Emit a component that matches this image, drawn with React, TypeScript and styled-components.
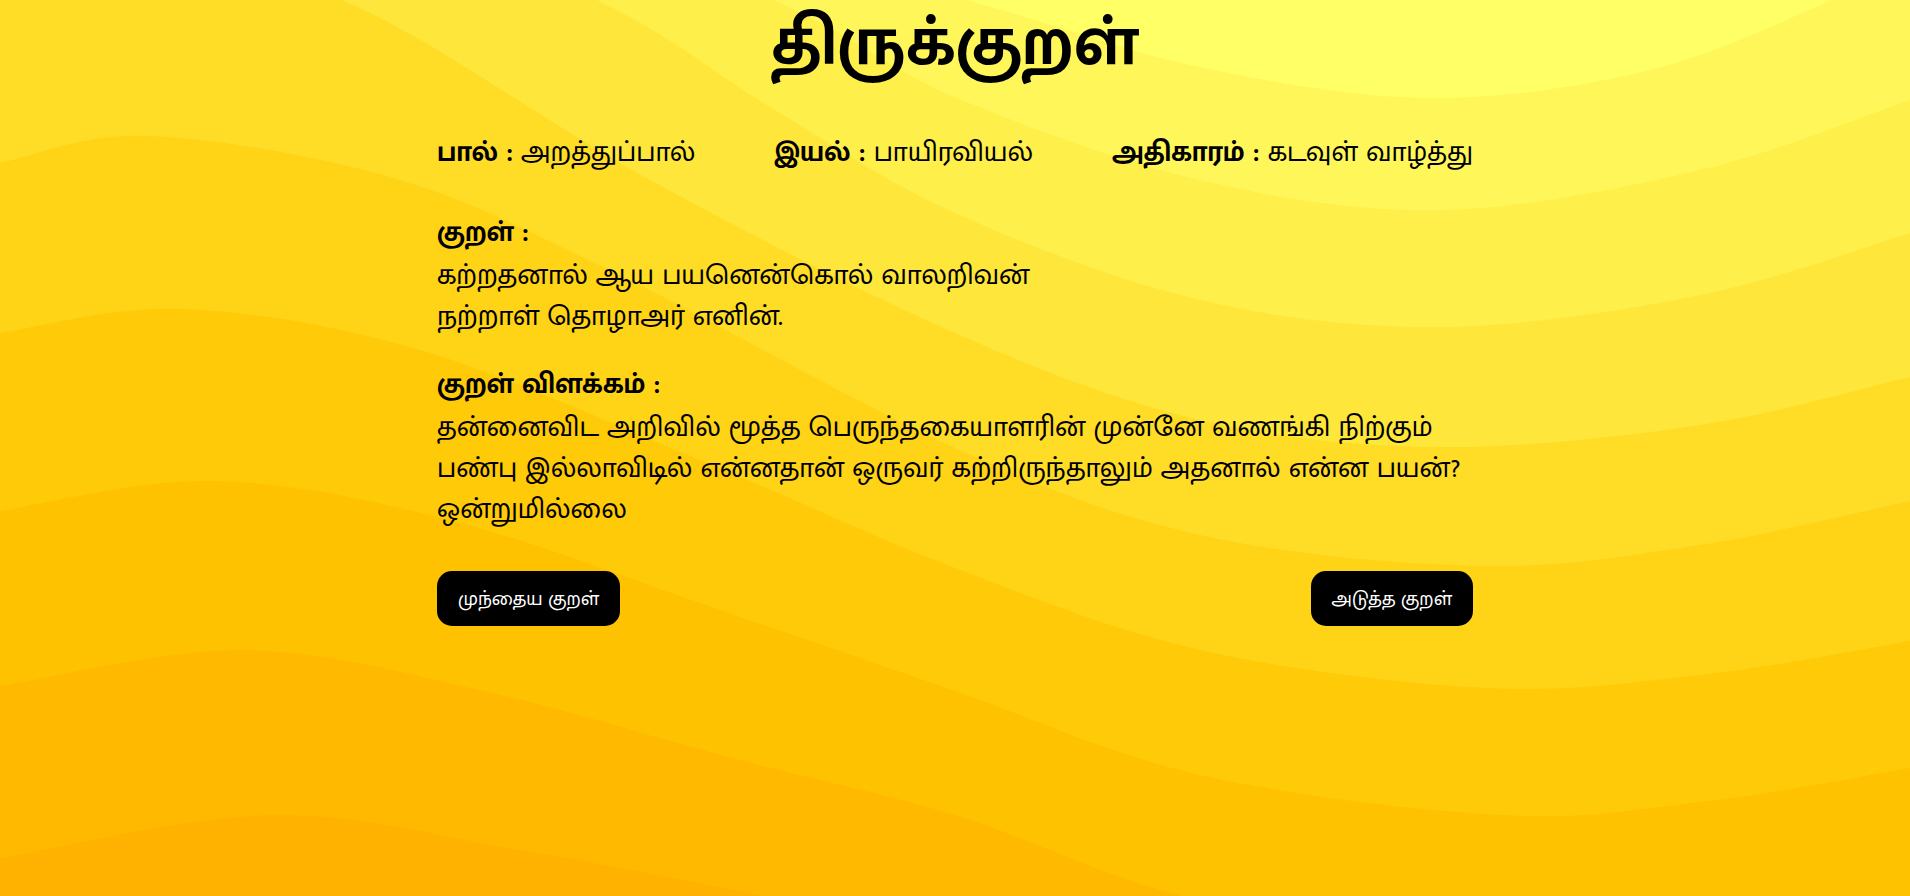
import React from 'react';
import styled, { createGlobalStyle } from 'styled-components';

const GlobalStyle = createGlobalStyle`
  html, body { margin: 0; padding: 0; }
  body {
    font-family: "Mukta Malar", "Noto Sans", sans-serif;
    color: #000;
    background: #ffb300;
  }
`;

const Page = styled.div`
  position: relative;
  width: 100%;
  height: 896px;
  overflow: hidden;
`;

const WaveLayer = styled.svg`
  position: absolute;
  inset: 0;
  width: 100%;
  height: 100%;
  z-index: 0;
`;

const Content = styled.main`
  position: relative;
  z-index: 1;
  width: 1036px;
  margin: 0 auto;
  display: flex;
  flex-direction: column;
`;

const Title = styled.h1`
  margin: 0;
  padding-top: 2px;
  font-size: 69px;
  line-height: 84px;
  font-weight: 700;
  text-align: center;
`;

const MetaRow = styled.div`
  margin-top: 46px;
  display: flex;
  justify-content: space-between;
  font-size: 29px;
  line-height: 41px;
`;

const MetaItem = styled.div`
  white-space: nowrap;
`;

const Label = styled.span`
  font-weight: 700;
`;

const Section = styled.section<{ $gap: number }>`
  margin-top: ${(p) => p.$gap}px;
  font-size: 29px;
  line-height: 41px;
`;

const Heading = styled.div`
  font-weight: 700;
  margin-bottom: 2px;
`;

const Body = styled.p`
  margin: 0;
`;

const ButtonRow = styled.div`
  margin-top: 41px;
  display: flex;
  justify-content: space-between;
`;

const NavButton = styled.button`
  height: 55px;
  padding: 0 21px;
  border: none;
  border-radius: 15px;
  background: #000;
  color: #fff;
  font-family: inherit;
  font-size: 20px;
  cursor: pointer;
`;

type Pt = [number, number];

const smoothPath = (pts: Pt[]): string => {
  const f = (n: number) => n.toFixed(1);
  let d = `M${f(pts[0][0])},${f(pts[0][1])}`;
  for (let i = 0; i < pts.length - 1; i++) {
    const p0 = pts[i - 1] || pts[i];
    const p1 = pts[i];
    const p2 = pts[i + 1];
    const p3 = pts[i + 2] || p2;
    const c1x = p1[0] + (p2[0] - p0[0]) / 6;
    const c1y = p1[1] + (p2[1] - p0[1]) / 6;
    const c2x = p2[0] - (p3[0] - p1[0]) / 6;
    const c2y = p2[1] - (p3[1] - p1[1]) / 6;
    d += ` C${f(c1x)},${f(c1y)} ${f(c2x)},${f(c2y)} ${f(p2[0])},${f(p2[1])}`;
  }
  return `${d} L1980,1100 L-80,1100 Z`;
};

const waves: { color: string; pts: Pt[] }[] = [
  { color: '#fff75a', pts: [[-80, -300], [500, -130], [967, 0], [1200, 67], [1430, 98], [1650, 70], [1832, 0], [1980, -70]] },
  { color: '#ffef4a', pts: [[-80, -380], [400, -150], [773, 0], [955, 97], [1200, 180], [1442, 210], [1700, 170], [1910, 100], [1980, 75]] },
  { color: '#ffe63a', pts: [[-80, -250], [300, -120], [597, 0], [775, 110], [955, 213], [1200, 300], [1442, 327], [1700, 295], [1910, 233], [1980, 210]] },
  { color: '#ffdc26', pts: [[-80, -40], [115, -37], [341, 0], [650, 180], [955, 333], [1200, 420], [1442, 447], [1700, 425], [1910, 377], [1980, 360]] },
  { color: '#ffd316', pts: [[-80, 180], [0, 163], [146, 136], [390, 177], [609, 270], [955, 448], [1200, 535], [1479, 566], [1700, 545], [1910, 501], [1980, 485]] },
  { color: '#ffca08', pts: [[-80, 350], [0, 333], [183, 309], [420, 350], [700, 460], [955, 568], [1200, 650], [1485, 688], [1700, 675], [1910, 641], [1980, 625]] },
  { color: '#ffc200', pts: [[-80, 528], [0, 511], [213, 481], [450, 520], [720, 610], [955, 691], [1200, 775], [1503, 815], [1700, 802], [1910, 768], [1980, 752]] },
  { color: '#ffba00', pts: [[-80, 703], [0, 686], [244, 650], [480, 690], [740, 760], [955, 815], [1200, 900], [1520, 940], [1910, 900], [1980, 885]] },
  { color: '#ffb300', pts: [[-80, 875], [0, 858], [274, 815], [520, 850], [760, 895], [955, 935], [1530, 1060], [1980, 1000]] },
];

const Background: React.FC = () => (
  <WaveLayer viewBox="0 0 1910 896" preserveAspectRatio="none" aria-hidden="true">
    <rect x="0" y="0" width="1910" height="896" fill="#ffff66" />
    {waves.map((w, i) => (
      <path key={i} d={smoothPath(w.pts)} fill={w.color} />
    ))}
  </WaveLayer>
);

const meta = [
  { label: 'பால்', value: 'அறத்துப்பால்' },
  { label: 'இயல்', value: 'பாயிரவியல்' },
  { label: 'அதிகாரம்', value: 'கடவுள் வாழ்த்து' },
];

export default function App() {
  return (
    <>
      <GlobalStyle />
      <Page>
        <Background />
        <Content>
          <Title>திருக்குறள்</Title>
          <MetaRow>
            {meta.map((m) => (
              <MetaItem key={m.label}>
                <Label>{m.label} :</Label> {m.value}
              </MetaItem>
            ))}
          </MetaRow>
          <Section $gap={39}>
            <Heading>குறள் :</Heading>
            <Body>
              கற்றதனால் ஆய பயனென்கொல் வாலறிவன்
              <br />
              நற்றாள் தொழாஅர் எனின்.
            </Body>
          </Section>
          <Section $gap={27}>
            <Heading>குறள் விளக்கம் :</Heading>
            <Body>
              தன்னைவிட அறிவில் மூத்த பெருந்தகையாளரின் முன்னே வணங்கி நிற்கும் பண்பு இல்லாவிடில் என்னதான் ஒருவர் கற்றிருந்தாலும் அதனால் என்ன பயன்? ஒன்றுமில்லை
            </Body>
          </Section>
          <ButtonRow>
            <NavButton>முந்தைய குறள்</NavButton>
            <NavButton>அடுத்த குறள்</NavButton>
          </ButtonRow>
        </Content>
      </Page>
    </>
  );
}
